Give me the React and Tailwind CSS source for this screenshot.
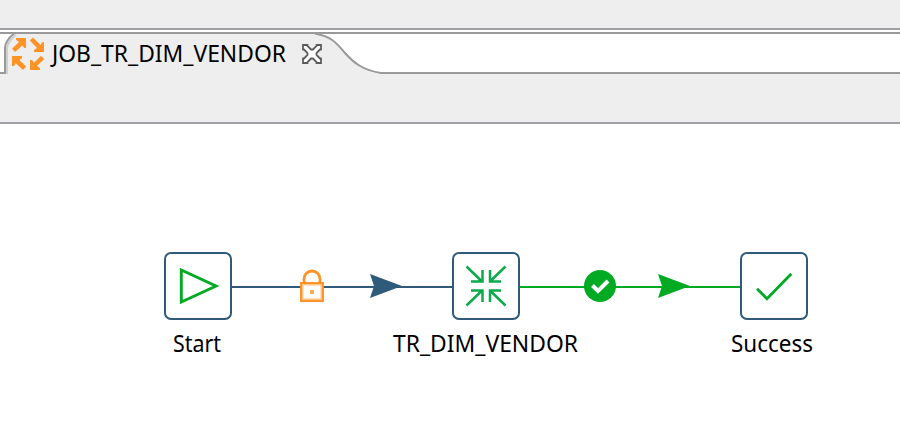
const NAVY = "#2f5a7a";
const GREEN = "#00aa22";

function JobIcon() {
  return (
    <svg width="34" height="34" viewBox="11 37 34 34" className="shrink-0" fill="#ff9326">
      <path d="M16 38H26V48H24.5L22.3 45.5L15 52L12 48.7L19 42L16 39.8Z" />
      <path d="M44 42V52H34V50L37 48L29.8 40.5L33 37.5L40.5 45L42.5 42Z" />
      <path d="M12 56H22V58L19.3 60L26.2 66.5L23 70L15.8 63.2L14 66H12Z" />
      <path d="M30 70V60H32L34 62.8L41 55.7L44.2 59L37 66L40 68V70Z" />
    </svg>
  );
}

function CloseIcon() {
  return (
    <svg width="20" height="20" viewBox="0 0 20 20" className="block shrink-0">
      <path d="M1 1H5.5V2L9 5.5H11L14.5 2V1H19V5.5H18L14.5 9V11L18 14.5H19V19H14.5V18L11 14.5H9L5.5 18V19H1V14.5H2L5.5 11V9L2 5.5H1Z" fill="#fff" stroke="#5c5c5c" strokeWidth="1.8" />
    </svg>
  );
}

function Tab() {
  return (
    <div className="relative flex h-10 w-full items-center bg-white">
      <svg className="absolute inset-0" width="900" height="42" viewBox="0 32 900 42">
        <path d="M5 74V48Q5 40 14 33H315C333 37 337 44 345 53S362 70 381 73V74Z" fill="#eeeeee" />
        <path d="M7 74V49Q7 42 16 35" fill="none" stroke="#cfcfcf" strokeWidth="2" />
        <path d="M0 73H5V48Q5 41 14 33.5" fill="none" stroke="#999" strokeWidth="2" />
        <path d="M315 33.5C333 37 337 44 345 53S362 70 381 73H900" fill="none" stroke="#999" strokeWidth="2" />
        <path d="M0 33H900" stroke="#999" strokeWidth="2" />
      </svg>
      <div className="relative flex h-10 items-center pt-1 pl-[11px]">
        <JobIcon />
        <span className="ml-[7px] block w-[234px] whitespace-nowrap">
          <Label text="JOB_TR_DIM_VENDOR" width={234} />
        </span>
        <span className="ml-4"><CloseIcon /></span>
      </div>
    </div>
  );
}

function Label({ text, width }) {
  return (
    <svg width={width} height="32" className="block overflow-visible">
      <text x="0" y="24" fontSize="24" textLength={width} lengthAdjust="spacingAndGlyphs" fill="#000">{text}</text>
    </svg>
  );
}

function Node({ text, width, place, nudge, children }) {
  return (
    <div className={"absolute top-[128px] flex w-[68px] flex-col items-center " + place}>
      <div className="h-[68px] w-[68px] rounded-[7px] border-2 border-[#2f5a7a] bg-white">
        <svg width="64" height="64" viewBox="2 2 64 64" fill="none">{children}</svg>
      </div>
      <div className={"mt-2 " + nudge}><Label text={text} width={width} /></div>
    </div>
  );
}

function Hops() {
  return (
    <svg className="absolute inset-0" width="900" height="318" viewBox="0 124 900 318">
      <path d="M232 287H452" stroke={NAVY} strokeWidth="2" />
      <path d="M520 287H740" stroke={GREEN} strokeWidth="2" />
      <path d="M370 274L402 286L370 298L374 286Z" fill={NAVY} />
      <path d="M658 274L690 286L658 298L662 286Z" fill={GREEN} />
      <path d="M304 283V279A8 8 0 0 1 320 279V283" fill="none" stroke="#ff9326" strokeWidth="2.8" />
      <rect x="301" y="283" width="22" height="18" fill="#fff" stroke="#ff9326" strokeWidth="2" />
      <rect x="302.75" y="284.75" width="18.5" height="14.5" fill="none" stroke="#ffc588" strokeWidth="1.5" />
      <rect x="310" y="290" width="4" height="4" fill="#ffac55" />
      <circle cx="600" cy="286" r="16" fill={GREEN} />
      <path d="M592.5 285.5L598 291L608 281" fill="none" stroke="#fff" strokeWidth="4" />
    </svg>
  );
}

export default function App() {
  return (
    <div className="flex h-[442px] w-[900px] flex-col overflow-hidden bg-white font-['Noto_Sans','Open_Sans',sans-serif]">
      <div className="h-[30px] shrink-0 border-b-2 border-[#a0a0a5] bg-[#eeeeee]" />
      <div className="h-[44px] shrink-0 bg-white pt-0.5"><Tab /></div>
      <div className="h-[50px] shrink-0 border-b-2 border-[#a0a0a5] bg-[#eeeeee]" />
      <main className="relative h-[318px] shrink-0">
        <Hops />
        <Node text="Start" width={48} place="left-[164px]" nudge="mr-[3px]">
          <path d="M17.3 18L52 34L17.3 50Z" stroke={GREEN} strokeWidth="2.9" />
        </Node>
        <Node text="TR_DIM_VENDOR" width={185} place="left-[452px]" nudge="mr-[1px]">
          <path d="M14.5 14.5L30 29.5M30.5 18V29.5H19M53.5 14.5L38 29.5M38 18V29.5H49M14.5 53.5L30 38.5M30.5 50V38.5H19M53.5 53.5L38 38.5M38 50V38.5H49" stroke="#0caa4b" strokeWidth="2.5" />
        </Node>
        <Node text="Success" width={82} place="left-[740px]" nudge="mr-[5px]">
          <path d="M17 36.7L27 46.7L51.3 21.7" stroke={GREEN} strokeWidth="2.8" />
        </Node>
      </main>
    </div>
  );
}
